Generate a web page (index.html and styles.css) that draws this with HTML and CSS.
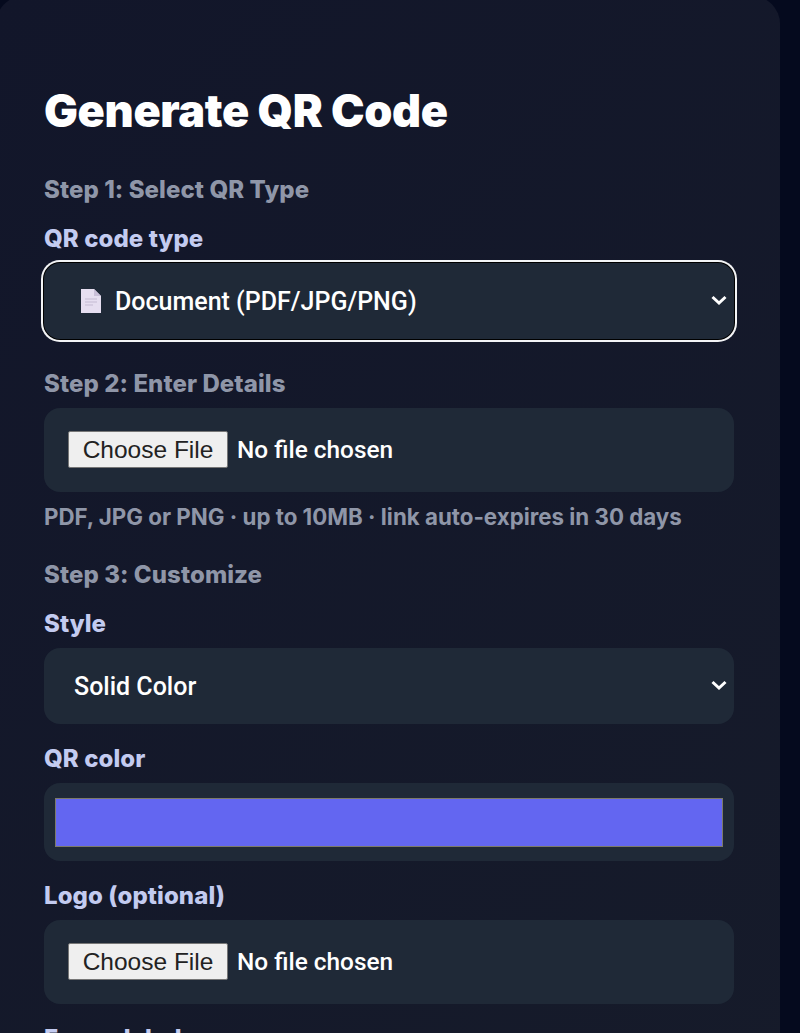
FILE: index.html
```html
<!DOCTYPE html>
<html lang="en">
<head>
    <meta charset="UTF-8">
    <meta name="viewport" content="width=device-width, initial-scale=1.0">
    <title>Generate QR Code</title>
    <link rel="stylesheet" href="styles.css">
</head>
<body>
    <main class="card">
        <h1 class="title">Generate QR Code</h1>

        <h2 class="step step-first">Step 1: Select QR Type</h2>
        <label class="label" for="qr-type">QR code type</label>
        <div class="select-wrap">
            <svg class="doc-icon" width="22" height="26" viewBox="0 0 22 26">
                <path d="M1 1h13l7 7v17H1z" fill="#e6def0"/>
                <path d="M14 1l7 7h-7z" fill="#c9bfd8"/>
                <path d="M5 11h12M5 14h12M5 17h8" stroke="#cfc6dc" stroke-width="1.4"/>
            </svg>
            <select id="qr-type" class="select select-focus">
                <option>Document (PDF/JPG/PNG)</option>
            </select>
            <svg class="chevron" width="18" height="12" viewBox="0 0 18 12">
                <path d="M2.500 3L9 9l6.500-6" fill="none" stroke="#fff" stroke-width="3"/>
            </svg>
        </div>

        <h2 class="step">Step 2: Enter Details</h2>
        <div class="file-box">
            <input class="file" type="file">
        </div>
        <p class="hint">PDF, JPG or PNG · up to 10MB · link auto-expires in 30 days</p>

        <h2 class="step">Step 3: Customize</h2>
        <label class="label" for="qr-style">Style</label>
        <div class="select-wrap">
            <select id="qr-style" class="select">
                <option>Solid Color</option>
            </select>
            <svg class="chevron" width="18" height="12" viewBox="0 0 18 12">
                <path d="M2.500 3L9 9l6.500-6" fill="none" stroke="#fff" stroke-width="3"/>
            </svg>
        </div>

        <label class="label label-gap" for="qr-color">QR color</label>
        <div class="color-box">
            <input id="qr-color" class="color" type="color" value="#6366f1">
        </div>

        <label class="label label-gap" for="qr-logo">Logo (optional)</label>
        <div class="file-box">
            <input id="qr-logo" class="file" type="file">
        </div>

        <label class="label label-gap">Frame label</label>
    </main>
</body>
</html>
```

FILE: styles.css
```css
html, body {
    height: 100%;
    overflow: hidden;
}
body {
    margin: 0;
    background-color: #050a1e;
    font-family: Inter, "Liberation Sans", sans-serif;
}
.card {
    box-sizing: border-box;
    width: 784px;
    margin: -4px 0 0 -4px;
    padding: 88px 46px 80px 48px;
    background: linear-gradient(135deg, #12162a, #161b2a);
    border-radius: 28px;
}
.title {
    margin: 0;
    color: #fff;
    font-size: 45px;
    font-weight: 900;
    line-height: 54px;
    letter-spacing: -0.35px;
}
.step {
    margin: 31px 0 10px;
    color: #8f96a8;
    font-size: 24px;
    font-weight: 800;
    line-height: 28px;
    letter-spacing: 0.08px;
}
.step-first {
    margin-top: 38px;
}
.step + .label {
    margin-top: 21px;
}
.label {
    display: block;
    margin-bottom: 10px;
    color: #c3cbf0;
    font-size: 24px;
    font-weight: 800;
    line-height: 28px;
    letter-spacing: 0.08px;
}
.label-gap {
    margin-top: 21px;
}
.select-wrap {
    position: relative;
}
.select {
    box-sizing: border-box;
    display: block;
    width: 690px;
    height: 76px;
    padding: 0 30px;
    appearance: none;
    border: 0;
    border-radius: 16px;
    background-color: #1f2937;
    color: #fff;
    font-family: Roboto, "Liberation Sans", sans-serif;
    font-size: 25px;
    font-weight: 500;
}
.select-focus {
    padding-left: 71px;
    box-shadow: 0 0 0 1px #000, 0 0 0 3px #f3f4f6;
}
.doc-icon {
    position: absolute;
    z-index: 1;
    left: 36px;
    top: 25px;
}
.chevron {
    position: absolute;
    right: 6px;
    top: 31px;
}
.file-box {
    box-sizing: border-box;
    width: 690px;
    height: 84px;
    padding: 23px 24px 0;
    background-color: #1f2937;
    border-radius: 16px;
}
.file {
    display: block;
    width: 640px;
    color: #fff;
    font-family: Roboto, "Liberation Sans", sans-serif;
    font-size: 24.4px;
    font-weight: 500;
}
.file::file-selector-button {
    box-sizing: border-box;
    width: 160px;
    height: 37px;
    margin-right: 9px;
    padding: 0;
    border: 1px solid #767676;
    border-radius: 2px;
    background-color: #efefef;
    color: #222;
    font-family: "Liberation Sans", sans-serif;
    font-size: 24.500px;
    font-weight: 400;
}
.hint {
    margin: 12px 0 0;
    color: #8f96a8;
    font-size: 22.3px;
    font-weight: 700;
    line-height: 26px;
}
.color-box {
    box-sizing: border-box;
    width: 690px;
    height: 78px;
    padding: 15px 11px;
    background-color: #1f2937;
    border-radius: 16px;
}
.color {
    display: block;
    box-sizing: border-box;
    width: 668px;
    height: 49px;
    padding: 0;
    border: 1px solid #7c7a6a;
    background: #6366f1;
    appearance: none;
}
.color::-webkit-color-swatch-wrapper {
    padding: 0;
}
.color::-webkit-color-swatch {
    border: 0;
}
```
